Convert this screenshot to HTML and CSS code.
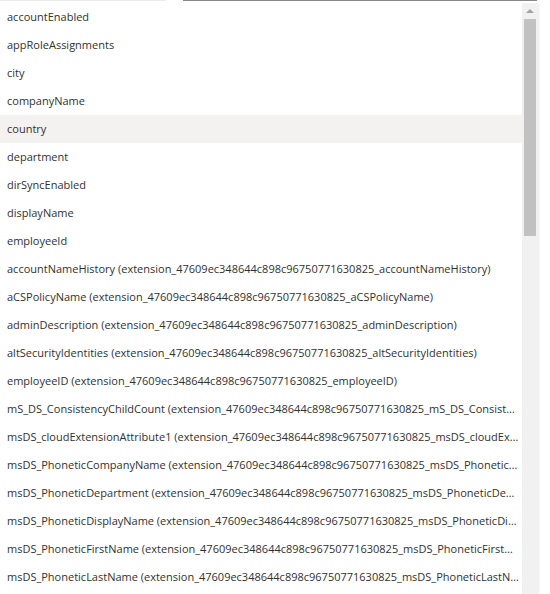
FILE: index.html
```html
<!DOCTYPE html>
<html>
<head>
<meta charset="utf-8">
<link rel="stylesheet" href="styles.css">
</head>
<body>
<div class="top">
  <div class="top-left"></div>
  <div class="top-gap"></div>
  <div class="top-input"></div>
</div>
<div class="panel">
  <ul class="list">
    <li class="opt">accountEnabled</li>
    <li class="opt">appRoleAssignments</li>
    <li class="opt">city</li>
    <li class="opt">companyName</li>
    <li class="opt hover">country</li>
    <li class="opt">department</li>
    <li class="opt">dirSyncEnabled</li>
    <li class="opt">displayName</li>
    <li class="opt">employeeId</li>
    <li class="opt">accountNameHistory (extension_47609ec348644c898c96750771630825_accountNameHistory)</li>
    <li class="opt">aCSPolicyName (extension_47609ec348644c898c96750771630825_aCSPolicyName)</li>
    <li class="opt">adminDescription (extension_47609ec348644c898c96750771630825_adminDescription)</li>
    <li class="opt">altSecurityIdentities (extension_47609ec348644c898c96750771630825_altSecurityIdentities)</li>
    <li class="opt">employeeID (extension_47609ec348644c898c96750771630825_employeeID)</li>
    <li class="opt">mS_DS_ConsistencyChildCount (extension_47609ec348644c898c96750771630825_mS_DS_ConsistencyChildCount)</li>
    <li class="opt">msDS_cloudExtensionAttribute1 (extension_47609ec348644c898c96750771630825_msDS_cloudExtensionAttribute1)</li>
    <li class="opt">msDS_PhoneticCompanyName (extension_47609ec348644c898c96750771630825_msDS_PhoneticCompanyName)</li>
    <li class="opt">msDS_PhoneticDepartment (extension_47609ec348644c898c96750771630825_msDS_PhoneticDepartment)</li>
    <li class="opt">msDS_PhoneticDisplayName (extension_47609ec348644c898c96750771630825_msDS_PhoneticDisplayName)</li>
    <li class="opt">msDS_PhoneticFirstName (extension_47609ec348644c898c96750771630825_msDS_PhoneticFirstName)</li>
    <li class="opt">msDS_PhoneticLastName (extension_47609ec348644c898c96750771630825_msDS_PhoneticLastName)</li>
    <li class="opt">msDS_PhoneticLastNameKana (extension_47609ec348644c898c96750771630825_msDS_PhoneticLastNameKana)</li>
  </ul>
  <div class="scrollbar">
    <div class="arrow"></div>
    <div class="thumb"></div>
  </div>
  <div class="edge"></div>
</div>
</body>
</html>
```

FILE: styles.css
```css
html, body {
  margin: 0;
  padding: 0;
  width: 550px;
  height: 594px;
  overflow: hidden;
  background: #ffffff;
}

body {
  font-family: "Open Sans", "Liberation Sans", sans-serif;
  font-size: 11px;
  color: #323130;
}

.top {
  display: flex;
  height: 3px;
}

.top-left {
  width: 166px;
  height: 1px;
  background: #edebe9;
}

.top-gap {
  width: 17px;
}

.top-input {
  width: 354px;
  height: 1px;
  background: #8a8886;
}

.panel {
  display: flex;
  height: 591px;
}

.list {
  list-style: none;
  margin: 0;
  padding: 0;
  width: 522px;
  flex: none;
}

.opt {
  height: 28px;
  line-height: 28px;
  padding: 0 3px 0 7px;
  white-space: nowrap;
  overflow: hidden;
  text-overflow: ellipsis;
}

.opt.hover {
  background: #f3f2f1;
}

.scrollbar {
  width: 16px;
  flex: none;
  background: #f1f1f1;
  display: flex;
  flex-direction: column;
  align-items: center;
}

.arrow {
  margin-top: 6px;
  width: 0;
  height: 0;
  border-left: 4px solid transparent;
  border-right: 4px solid transparent;
  border-bottom: 4px solid #a3a3a3;
}

.thumb {
  margin-top: 6px;
  width: 12px;
  height: 217px;
  background: #c1c1c1;
}

.edge {
  width: 2px;
  background: linear-gradient(to right, #f0f0f0, #fafafa);
}
```
